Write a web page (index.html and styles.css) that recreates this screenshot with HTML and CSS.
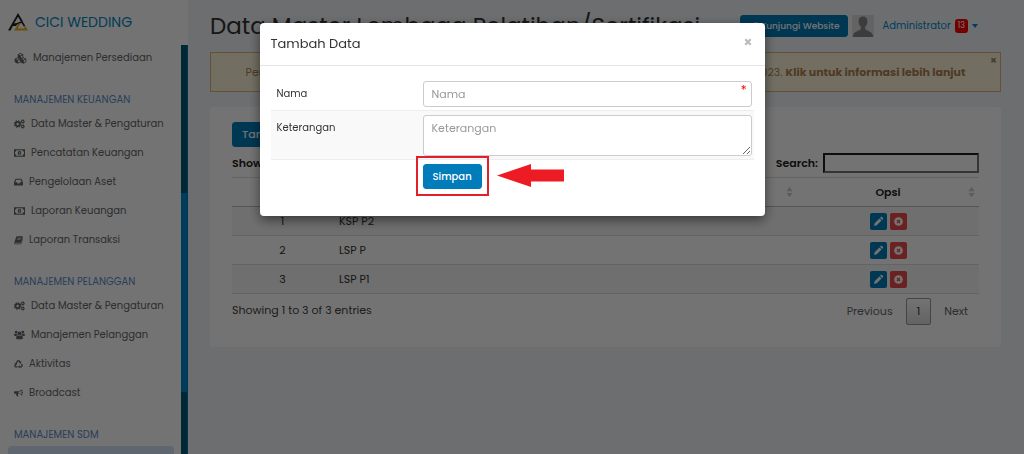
FILE: index.html
```html
<!DOCTYPE html>
<html lang="id">
<head>
	<meta charset="UTF-8">
	<meta name="viewport" content="width=device-width, initial-scale=1">
	<title>Data Master Lembaga Pelatihan/Sertifikasi</title>
	<link rel="stylesheet" href="styles.css">
</head>
<body>

<!-- icons -->
<svg class="sprite" aria-hidden="true">
	<symbol id="cubes" viewBox="0 0 18 16">
		<path fill="currentColor" fill-rule="evenodd" d="M9 0l4 1.700v4.500l4.500 2v5L13.200 15.500 9 13.500l-4.200 2L.5 13.200v-5l4.500-2V1.700zM9 1.300L6.500 2.400 9 3.500l2.500-1.100zM9.600 4.600v2.700l2.300-1V3.600zM4.800 7.500L2.200 8.600l2.600 1.200 2.600-1.200zM5.400 10.900v3l2.600-1.300V9.700zM13.200 7.500l-2.600 1.100 2.600 1.200 2.600-1.200zM13.800 10.900v3l2.500-1.300V9.700z"/>
	</symbol>
	<symbol id="gears" viewBox="0 0 18 16">
		<circle cx="6" cy="8" r="3.500" fill="none" stroke="currentColor" stroke-width="3"/>
		<circle cx="6" cy="8" r="5.300" fill="none" stroke="currentColor" stroke-width="1.800" stroke-dasharray="2.160 2"/>
		<circle cx="14.300" cy="3.900" r="1.900" fill="none" stroke="currentColor" stroke-width="1.700"/>
		<circle cx="14.300" cy="3.900" r="3" fill="none" stroke="currentColor" stroke-width="1.200" stroke-dasharray="1.340 1.350"/>
		<circle cx="14.300" cy="12.100" r="1.900" fill="none" stroke="currentColor" stroke-width="1.700"/>
		<circle cx="14.300" cy="12.100" r="3" fill="none" stroke="currentColor" stroke-width="1.200" stroke-dasharray="1.340 1.350"/>
	</symbol>
	<symbol id="money" viewBox="0 0 18 16">
		<path fill="currentColor" fill-rule="evenodd" d="M0 2h18v12H0zM4 3.700A2.300 2.300 0 0 1 1.700 6v4A2.300 2.300 0 0 1 4 12.300h10a2.300 2.300 0 0 1 2.300-2.300V6A2.300 2.300 0 0 1 14 3.700z"/>
		<ellipse cx="9" cy="8" rx="2.900" ry="3.600" fill="currentColor"/>
		<path d="M8 6.900l1.200-.8v3.500M7.900 9.900h2.600" fill="none" stroke="#fff" stroke-width=".9"/>
	</symbol>
	<symbol id="inbox" viewBox="0 0 16 16">
		<path fill="currentColor" fill-rule="evenodd" d="M3.500 2h9a1 1 0 0 1 .9.600L16 8.500V13.200a.8.8 0 0 1-.8.8H.8a.8.8 0 0 1-.8-.8V8.500l2.600-5.900a1 1 0 0 1 .9-.6zM4.200 4.200L2.400 8.600h3l.9 1.900h3.400l.9-1.900h3l-1.800-4.400z"/>
	</symbol>
	<symbol id="book" viewBox="0 0 16 16">
		<path fill="currentColor" fill-rule="evenodd" d="M5.600 1.500h8.600c1 0 1.500.8 1.200 1.700l-2.700 8.600c-.3.900-1 1.300-1.900 1.300H2.700c-.6 0-.9.500-.6 1h9.300c.8 0 1.300-.4 1.500-1l2.500-8c.5.3.6.9.4 1.500l-2.400 7.600c-.3.900-1.100 1.400-2 1.400H2.500C1.100 15.600 0 14.200.5 12.800L3.600 3c.3-1 1-1.500 2-1.500zM6.300 4.200L6 5.200h6.300l.3-1zM5.600 6.500l-.3 1h6.300l.3-1z"/>
	</symbol>
	<symbol id="users" viewBox="0 0 18 16">
		<g fill="currentColor">
			<circle cx="9" cy="5.500" r="3.300"/>
			<circle cx="3.500" cy="3.200" r="2.300"/>
			<circle cx="14.500" cy="3.200" r="2.300"/>
			<path d="M5.900 8.300C4.200 8.700 3.500 10.700 3.500 13c0 1.200.8 2 2 2h7c1.200 0 2-.8 2-2 0-2.300-.7-4.300-2.400-4.700-1.800 1.800-4.400 1.800-6.200 0z"/>
			<path d="M1.500 5.400C.5 5.700 0 7 0 8.200c0 .9.600 1.300 1.400 1.300h2.200A4 4 0 0 1 5.400 7.800 4 4 0 0 1 4.900 6 4 4 0 0 1 1.500 5.400zM16.500 5.400c1 .3 1.500 1.600 1.500 2.800 0 .9-.6 1.300-1.400 1.300h-2.200a4 4 0 0 0-1.800-1.700 4 4 0 0 0 .5-1.800 4 4 0 0 0 3.400-.6z"/>
		</g>
	</symbol>
	<symbol id="recycle" viewBox="0 0 16 16">
		<g fill="none" stroke="currentColor" stroke-width="2.400">
			<path d="M4.300 6.200L6.300 2.400h3l1.800 3"/>
			<path d="M13.200 8.200l1.300 2.600-1.300 2.400H9.500"/>
			<path d="M6.500 13.200H2.700L1.400 10.900 3.300 7.600"/>
		</g>
		<path fill="currentColor" d="M12.900 3.200l-.4 4.400-4-1.700zM10.300 10v6.200L7 13.100zM.6 6.900l4.200-1.500.9 4.300z"/>
	</symbol>
	<symbol id="bullhorn" viewBox="0 0 17 16">
		<path fill="currentColor" fill-rule="evenodd" d="M15.600 1v4.500a1.400 1.400 0 0 1 0 3V13c-2.100-1.900-4.600-3.200-7.600-3.500-1 .5-.9 1.500-.3 2-.5.800.1 1.500 1 2.200-.6 1.100-2.800 1-3.800.2-.5-1.500-1.200-2.600-.6-4.400H1.500A1.500 1.500 0 0 1 0 8V6a1.500 1.500 0 0 1 1.500-1.500h5.800C10.500 4.500 13.500 2.900 15.600 1zM14.300 3.600C12.500 4.800 10.600 5.500 8.600 5.700v2.600c2 .2 3.900.9 5.700 2.100z"/>
	</symbol>
	<symbol id="pencil" viewBox="0 0 16 16">
		<path fill="currentColor" d="M1.500 14.500l.9-4L9.300 3.600l3.100 3.100-6.900 6.900zM10.200 2.700l1.100-1.100c.6-.6 1.300-.6 1.900 0l1.200 1.200c.6.600.6 1.300 0 1.900l-1.100 1.100z"/>
	</symbol>
	<symbol id="times-circle" viewBox="0 0 16 16">
		<circle cx="8" cy="8" r="6.300" fill="currentColor"/>
		<path d="M5.800 5.800l4.400 4.400M10.200 5.800l-4.400 4.400" stroke="#e94b4b" stroke-width="1.800"/>
	</symbol>
	<symbol id="external" viewBox="0 0 16 16">
		<path fill="none" stroke="currentColor" stroke-width="2" d="M8 3.500H2v10h10V9"/>
		<path fill="currentColor" d="M9 1h6v6l-2-2-5 5-2-2 5-5z"/>
	</symbol>
	<symbol id="sort" viewBox="0 0 8 12">
		<path fill="currentColor" d="M4 0l3.500 5h-7zM4 12L.5 7h7z"/>
	</symbol>
</svg>

<div class="wrapper">
	<aside class="sidebar">
		<a href="#" class="brand">
			<svg class="logo" viewBox="0 0 20 18" aria-hidden="true">
				<path fill="#222" fill-rule="evenodd" d="M10 0l4.900 8.200-1.900.6L10 3.800 6.100 10.600h3.400L8 12.900H4.800L2.500 17.500H0z"/>
				<path fill="none" stroke="#222" stroke-width="1.600" d="M4.500 12.200L14 9l2.500 4.200"/>
				<path fill="#eda912" d="M12.800 10l-3.300 5.400h7.200l-1-1.900h2L20 17.500H6.200l4.300-7z"/>
			</svg>
			<span>CICI WEDDING</span>
		</a>
		<div class="menu-area">
			<nav class="menu">
				<a href="#"><svg class="ico ico-lg"><use href="#cubes"/></svg>Manajemen Persediaan</a>
				<h2>MANAJEMEN KEUANGAN</h2>
				<a href="#"><svg class="ico"><use href="#gears"/></svg>Data Master &amp; Pengaturan</a>
				<a href="#"><svg class="ico"><use href="#money"/></svg>Pencatatan Keuangan</a>
				<a href="#"><svg class="ico ico-sm"><use href="#inbox"/></svg>Pengelolaan Aset</a>
				<a href="#"><svg class="ico"><use href="#money"/></svg>Laporan Keuangan</a>
				<a href="#"><svg class="ico ico-sm"><use href="#book"/></svg>Laporan Transaksi</a>
				<h2>MANAJEMEN PELANGGAN</h2>
				<a href="#"><svg class="ico"><use href="#gears"/></svg>Data Master &amp; Pengaturan</a>
				<a href="#"><svg class="ico"><use href="#users"/></svg>Manajemen Pelanggan</a>
				<a href="#"><svg class="ico ico-sm"><use href="#recycle"/></svg>Aktivitas</a>
				<a href="#"><svg class="ico ico-sm"><use href="#bullhorn"/></svg>Broadcast</a>
				<h2>MANAJEMEN SDM</h2>
				<a href="#" class="active"></a>
			</nav>
			<div class="scrollbar"><div class="thumb"></div></div>
		</div>
	</aside>

	<main class="content">
		<header class="topbar">
			<h1>Data Master Lembaga Pelatihan/Sertifikasi</h1>
			<div class="user">
				<a href="#" class="btn btn-visit"><svg class="ico-btn"><use href="#external"/></svg>Kunjungi Website</a>
				<svg class="avatar" viewBox="0 0 22 22" aria-hidden="true">
					<rect width="22" height="22" fill="#dcdcdc"/>
					<path fill="#858585" d="M11 1.500c3 0 4.600 2 4.400 5-.1 2.300-1 4.200-2.200 5.300v2.400c1.500 1.700 6.800 2 7.800 6.300V22H1v-1.500c1-4.300 6.300-4.600 7.800-6.300v-2.400C7.600 10.700 6.700 8.800 6.600 6.500c-.2-3 1.400-5 4.400-5z"/>
				</svg>
				<a href="#" class="account">Administrator <span class="badge">13</span><span class="caret"></span></a>
			</div>
		</header>

		<div class="alert">
			<p>Pemberitahuan: masa aktif layanan website Anda akan berakhir pada tanggal 31 Desember 2023. <b>Klik untuk informasi lebih lanjut</b></p>
			<button type="button" class="alert-close" aria-label="Tutup">×</button>
		</div>

		<section class="card">
			<button type="button" class="btn">Tambah Data</button>
			<div class="table-tools">
				<b>Show</b>
				<label>Search: <input type="search"></label>
			</div>
			<table class="data">
				<thead>
					<tr>
						<th class="no">No</th>
						<th>Nama<svg class="sort"><use href="#sort"/></svg></th>
						<th class="opsi">Opsi<svg class="sort"><use href="#sort"/></svg></th>
					</tr>
				</thead>
				<tbody>
					<tr>
						<td class="no">1</td>
						<td>KSP P2</td>
						<td class="opsi"><button type="button" class="act edit" aria-label="Edit"><svg><use href="#pencil"/></svg></button><button type="button" class="act del" aria-label="Hapus"><svg><use href="#times-circle"/></svg></button></td>
					</tr>
					<tr>
						<td class="no">2</td>
						<td>LSP P</td>
						<td class="opsi"><button type="button" class="act edit" aria-label="Edit"><svg><use href="#pencil"/></svg></button><button type="button" class="act del" aria-label="Hapus"><svg><use href="#times-circle"/></svg></button></td>
					</tr>
					<tr>
						<td class="no">3</td>
						<td>LSP P1</td>
						<td class="opsi"><button type="button" class="act edit" aria-label="Edit"><svg><use href="#pencil"/></svg></button><button type="button" class="act del" aria-label="Hapus"><svg><use href="#times-circle"/></svg></button></td>
					</tr>
				</tbody>
			</table>
			<div class="table-foot">
				<span>Showing 1 to 3 of 3 entries</span>
				<div class="pages">
					<a href="#">Previous</a>
					<a href="#" class="current">1</a>
					<a href="#">Next</a>
				</div>
			</div>
		</section>
	</main>
</div>

<div class="backdrop">
	<div class="modal" role="dialog" aria-labelledby="modal-title">
		<div class="modal-header">
			<h4 id="modal-title">Tambah Data</h4>
			<button type="button" class="close" aria-label="Tutup">×</button>
		</div>
		<form class="modal-body">
			<div class="row">
				<label for="nama">Nama</label>
				<div class="field">
					<input type="text" id="nama" placeholder="Nama">
					<span class="required">*</span>
				</div>
			</div>
			<div class="row striped">
				<label for="keterangan">Keterangan</label>
				<div class="field">
					<textarea id="keterangan" placeholder="Keterangan"></textarea>
				</div>
			</div>
			<div class="row">
				<span></span>
				<div class="submit">
					<button type="button" class="btn">Simpan</button>
					<div class="highlight"></div>
					<svg class="arrow" viewBox="0 0 67 23" aria-hidden="true"><path fill="#ed1c24" d="M0 11.500L34 0v5.500h33v12H34V23z"/></svg>
				</div>
			</div>
		</form>
	</div>
</div>

</body>
</html>
```
FILE: styles.css
```css
*{
	box-sizing: border-box;
}
body{
	margin: 0;
	background: #f0f3f8;
	color: #333;
	font-family: Poppins, Inter, "Open Sans", sans-serif;
	font-size: 11px;
	line-height: 16px;
}
button, input, textarea{
	font: inherit;
}
a{
	color: inherit;
	text-decoration: none;
}
.sprite{
	display: none;
}

.wrapper{
	display: flex;
	height: 100vh;
	overflow: hidden;
}

/* sidebar */
.sidebar{
	display: flex;
	flex-direction: column;
	width: 188px;
	flex-shrink: 0;
	background: #fff;
}
.brand{
	display: flex;
	align-items: center;
	gap: 7px;
	height: 45px;
	padding: 0 0 2px 8px;
	color: #0088c2;
	font-size: 14px;
	flex-shrink: 0;
}
.logo{
	width: 20px;
	height: 18px;
}
.menu-area{
	display: flex;
	flex: 1;
	min-height: 0;
}
.menu{
	flex: 1;
	overflow: hidden;
	color: #666;
	font-size: 10px;
}
.menu a{
	display: flex;
	align-items: center;
	gap: 6px;
	height: 29px;
	padding: 0 0 3px 14px;
}
.menu h2{
	margin: 0;
	padding: 15px 0 0 14px;
	height: 37px;
	color: #5b8cc9;
	font-size: 10px;
	font-weight: 400;
	line-height: 22px;
}
.menu .active{
	margin: 0 7px 0 8px;
	background: #d5e3f5;
	border-radius: 4px;
}
.ico{
	width: 11px;
	height: 10px;
}
.ico-lg{
	width: 13px;
	height: 11px;
}
.ico-sm{
	width: 9px;
}
.scrollbar{
	width: 7px;
	padding: 148px 0 62px;
	background: #005878;
	border-right: 1px solid #0078a8;
}
.thumb{
	height: 100%;
	background: #0088cc;
}

/* page */
.content{
	flex: 1;
	min-width: 0;
	padding: 0 23px 0 22px;
}
.topbar{
	display: flex;
	align-items: center;
	justify-content: space-between;
	height: 52px;
}
h1{
	margin: 0;
	font-size: 23px;
	font-weight: 400;
	line-height: 32px;
	white-space: nowrap;
}
.user{
	display: flex;
	align-items: center;
	gap: 4px;
	padding-right: 23px;
}
.btn{
	padding: 4px 9px;
	border: 1px solid #007cba;
	border-radius: 3px;
	background: #007cba;
	color: #fff;
	font-weight: 500;
	line-height: 16px;
}
.btn-visit{
	display: flex;
	align-items: center;
	gap: 2px;
	padding: 2px 8px;
	font-size: 9px;
}
.ico-btn{
	width: 9px;
	height: 9px;
}
.avatar{
	width: 22px;
	height: 22px;
}
.account{
	display: flex;
	align-items: center;
	gap: 4px;
	padding-left: 4px;
	color: #0088cc;
	font-size: 10px;
}
.badge{
	padding: 0 3px;
	border-radius: 3px;
	background: #f00;
	color: #fff;
	font-size: 8px;
	line-height: 14px;
}
.caret{
	border: 3px solid transparent;
	border-top: 4px solid #0088cc;
	border-bottom: 0;
}
.alert{
	position: relative;
	padding: 11px;
	border: 1px solid #e0b080;
	background: #fcf6da;
	color: #b08050;
	text-align: center;
}
.alert p{
	margin: 0;
	white-space: nowrap;
}
.alert-close{
	position: absolute;
	top: 1px;
	right: 3px;
	padding: 0;
	border: 0;
	background: none;
	color: #a08b60;
	font-weight: 700;
	line-height: 12px;
}
.card{
	margin-top: 15px;
	padding: 15px 22px 22px;
	border-radius: 3px;
	background: #fff;
}
.table-tools{
	display: flex;
	align-items: center;
	justify-content: space-between;
	height: 30px;
	padding-top: 2px;
}
.card .btn{
	display: block;
	line-height: 15px;
}
.table-tools b, .table-tools label{
	color: #222;
	font-weight: 600;
}
.table-tools label{
	display: flex;
	align-items: center;
	gap: 5px;
}
.table-tools input{
	width: 156px;
	height: 20px;
	border: 2px inset #767676;
	background: #fff;
}
.data{
	width: 100%;
	border-collapse: collapse;
}
.data th, .data td{
	position: relative;
	height: 29px;
	padding: 0 6px;
	border-bottom: 1px solid #ddd;
	text-align: left;
}
.data th{
	border-top: 1px solid #ddd;
	border-bottom: 1px solid #bbb;
	color: #222;
	font-weight: 600;
	text-align: center;
}
.data tbody tr:nth-child(odd){
	background: #f6f6f6;
}
.data .no{
	width: 101px;
	text-align: center;
}
.data .opsi{
	width: 182px;
	text-align: center;
}
.sort{
	position: absolute;
	top: 8px;
	right: 4px;
	width: 7px;
	height: 12px;
	color: #ccc;
}
.act{
	width: 17px;
	height: 17px;
	padding: 3px;
	border: 0;
	border-radius: 2px;
	color: #fff;
	vertical-align: middle;
}
.act svg{
	display: block;
	width: 11px;
	height: 11px;
}
.edit{
	margin-right: 3px;
	background: #007cba;
}
.del{
	background: #e94b4b;
}
.table-foot{
	display: flex;
	justify-content: space-between;
	padding-top: 4px;
	color: #444;
}
.table-foot span{
	padding-top: 4px;
}
.pages{
	display: flex;
	gap: 2px;
	color: #666;
}
.pages a{
	padding: 4px 10px;
	border: 1px solid transparent;
	border-radius: 2px;
	line-height: 17px;
}
.pages .current{
	border-color: #979797;
	background: linear-gradient(#fff, #dcdcdc);
	color: #333;
}

/* modal */
.backdrop{
	position: fixed;
	inset: 0;
	display: flex;
	align-items: flex-start;
	justify-content: center;
	padding: 23px 0;
	background: rgba(0,0,0,.55);
}
.modal{
	width: 505px;
	border-radius: 4px;
	background: #fff;
	box-shadow: 0 4px 12px rgba(0,0,0,.5);
}
.modal-header{
	display: flex;
	align-items: center;
	justify-content: space-between;
	height: 43px;
	padding: 0 11px;
	border-bottom: 1px solid #e5e5e5;
}
.modal-header h4{
	margin: 0;
	font-size: 13px;
	font-weight: 400;
}
.close{
	padding: 0 1px 5px;
	border: 0;
	background: none;
	color: #bbb;
	font-size: 14px;
	font-weight: 700;
	line-height: 14px;
}
.modal-body{
	padding: 11px 11px 24px;
}
.row{
	display: grid;
	grid-template-columns: 146px 1fr;
	padding: 4px 2px 3px 6px;
	font-size: 10px;
}
.row label{
	padding-top: 5px;
}
.striped{
	border-top: 1px solid #eee;
	border-bottom: 1px solid #eee;
	background: #f9f9f9;
}
.field{
	position: relative;
}
.field input, .field textarea{
	display: block;
	width: 100%;
	height: 26px;
	padding: 4px 8px;
	border: 1px solid #ccc;
	border-radius: 3px;
	background: #fff;
	font-size: 11px;
	line-height: 16px;
}
.field textarea{
	height: 41px;
	resize: vertical;
}
.field ::placeholder{
	color: #999;
}
.required{
	position: absolute;
	top: 1px;
	right: 5px;
	color: #f00;
	font-size: 12px;
}
.submit{
	position: relative;
	justify-self: start;
}
.submit .btn{
	display: block;
	font-size: 10px;
	line-height: 15px;
}
/* pointer to the save button */
.highlight{
	position: absolute;
	inset: -8px -7px -7px;
	border: 2px solid #e3202a;
}
.arrow{
	position: absolute;
	top: 0;
	left: 74px;
	width: 67px;
	height: 23px;
}
```
